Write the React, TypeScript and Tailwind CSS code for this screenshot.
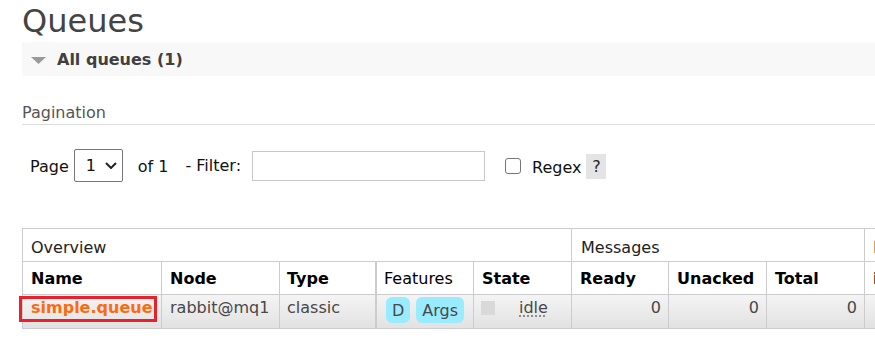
import React from "react";

const cellBase = "border-r border-b border-[#cccccc]";
const dataBg = "bg-linear-to-b from-[#f4f4f4] to-[#e2e2e2]";

export default function App() {
  return (
    <div className="w-[875px] h-[341px] overflow-hidden bg-white pl-[22px] font-['DejaVu_Sans',sans-serif] text-[16px] text-[#484848]">
      <h1 className="text-[32px] leading-[41px] mt-[1px] font-normal text-[#444444] whitespace-nowrap">Queues</h1>
      <div className="h-[34px] w-[900px] bg-[#f8f8f8] flex items-center">
        <svg width="15" height="7" viewBox="0 0 15 7" className="ml-[9px] mt-[2px]">
          <polygon points="0,0 15,0 7.5,7" fill="#9a9a9a" />
        </svg>
        <span className="ml-[11px] font-bold leading-[20px] mt-[2px] text-[#404040]">All queues (1)</span>
      </div>
      <h2 className="mt-[27px] leading-[20px] pb-[1px] border-b border-[#dddddd] text-[16px] font-normal text-[#555555] w-[900px]">
        Pagination
      </h2>
      <div className="mt-[24px] h-[33px] flex items-center text-[#111111] whitespace-nowrap">
        <span className="ml-[8px] leading-[20px] mt-[3px]">Page</span>
        <div className="ml-[5px] w-[49px] h-[33px] border border-[#767676] rounded-[2px] flex items-center">
          <span className="ml-[11px] leading-[20px] mt-[1px]">1</span>
          <svg width="12" height="7" viewBox="0 0 12 7" className="ml-[9px]">
            <polyline points="1,1 6,6 11,1" fill="none" stroke="#222222" strokeWidth="2" />
          </svg>
        </div>
        <span className="ml-[15px] leading-[20px] mt-[3px]">of 1</span>
        <span className="ml-[17px] leading-[20px] mt-[1px]">- Filter:</span>
        <div className="ml-[11px] w-[233px] h-[30px] border border-[#c8c8c8] bg-white" />
        <div className="ml-[20px] w-[16px] h-[16px] border-[1.5px] border-[#767676] rounded-[3px] mt-[1px]" />
        <span className="ml-[11px] leading-[20px] mt-[4px]">Regex</span>
        <span className="ml-[5px] w-[20px] h-[25px] bg-[#e4e4e4] flex items-center justify-center leading-[20px] mt-[2px] text-[#222222]">?</span>
      </div>
      <div className="mt-[46px] w-[1000px] grid grid-cols-[139px_118px_97px_97px_98px_97px_98px_98px_200px] border-l border-t border-[#cccccc]">
        {/* Row 1 */}
        <div className={`${cellBase} col-span-5 h-[33px] pl-[8px] pt-[9px] leading-[20px] text-[#222222]`}>Overview</div>
        <div className={`${cellBase} col-span-3 h-[33px] pl-[9px] pt-[9px] leading-[20px] text-[#222222]`}>Messages</div>
        <div className={`${cellBase} h-[33px] pl-[8px] pt-[9px] leading-[20px] text-[#222222] whitespace-nowrap`}>Message rates</div>
        {/* Row 2 */}
        <div className={`${cellBase} h-[33px] pl-[8px] pt-[7px] leading-[20px] font-bold text-black`}>Name</div>
        <div className={`${cellBase} h-[33px] pl-[8px] pt-[7px] leading-[20px] font-bold text-black`}>Node</div>
        <div className="border-r-2 border-b border-[#cccccc] h-[33px] pl-[7px] pt-[7px] leading-[20px] font-bold text-black">Type</div>
        <div className={`${cellBase} h-[33px] pl-[7px] pt-[7px] leading-[20px] text-black`}>Features</div>
        <div className={`${cellBase} h-[33px] pl-[8px] pt-[7px] leading-[20px] font-bold text-black`}>State</div>
        <div className={`${cellBase} h-[33px] pl-[8px] pt-[7px] leading-[20px] font-bold text-black`}>Ready</div>
        <div className={`${cellBase} h-[33px] pl-[8px] pt-[7px] leading-[20px] font-bold text-black`}>Unacked</div>
        <div className={`${cellBase} h-[33px] pl-[8px] pt-[7px] leading-[20px] font-bold text-black`}>Total</div>
        <div className={`${cellBase} h-[33px] pl-[8px] pt-[7px] leading-[20px] font-bold text-black`}>incoming</div>
        {/* Row 3 */}
        <div className={`${cellBase} ${dataBg} relative h-[34px] pl-[8px] pt-[3px] leading-[20px]`}>
          <span className="font-bold text-[#ff6a10]">simple.queue</span>
          <span className="absolute left-[-4px] top-[1px] w-[138px] h-[26px] border-[3px] border-[#e8212b]" />
        </div>
        <div className={`${cellBase} ${dataBg} h-[34px] pl-[8px] pt-[3px] leading-[20px]`}>rabbit@mq1</div>
        <div className={`border-r-2 border-b border-[#cccccc] ${dataBg} h-[34px] pl-[7px] pt-[3px] leading-[20px]`}>classic</div>
        <div className={`${cellBase} ${dataBg} h-[34px] pl-[9px] pt-[2px] flex gap-[6px]`}>
          <span className="h-[26px] px-[6px] pt-[4px] leading-[20px] rounded-[6px] bg-[#99ecff]">D</span>
          <span className="h-[26px] px-[6px] pt-[4px] leading-[20px] rounded-[6px] bg-[#99ecff]">Args</span>
        </div>
        <div className={`${cellBase} ${dataBg} h-[34px] pl-[7px] flex items-start`}>
          <span className="mt-[6px] w-[14px] h-[14px] bg-[#d9d9d9]" />
          <span className="ml-[24px] mt-[3px] leading-[20px] underline decoration-dotted decoration-[#777777] underline-offset-[3px]">idle</span>
        </div>
        <div className={`${cellBase} ${dataBg} h-[34px] pr-[7px] pt-[3px] leading-[20px] text-right`}>0</div>
        <div className={`${cellBase} ${dataBg} h-[34px] pr-[7px] pt-[3px] leading-[20px] text-right`}>0</div>
        <div className={`${cellBase} ${dataBg} h-[34px] pr-[7px] pt-[3px] leading-[20px] text-right`}>0</div>
        <div className={`${cellBase} ${dataBg} h-[34px]`}></div>
      </div>
    </div>
  );
}
